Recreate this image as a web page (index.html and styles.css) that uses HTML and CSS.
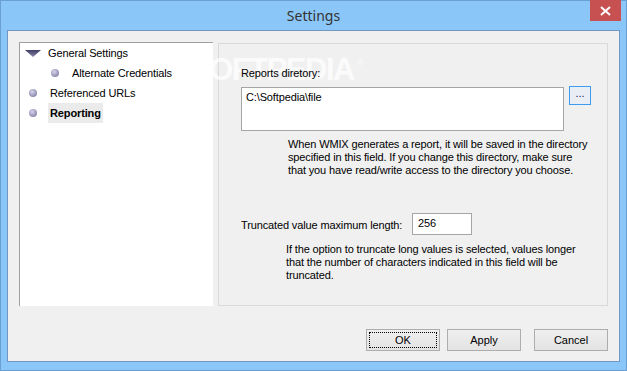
FILE: index.html
```html
<!DOCTYPE html>
<html lang="en">
<head>
    <meta charset="UTF-8">
    <title>Settings</title>
    <link rel="stylesheet" href="styles.css">
</head>
<body>
    <div class="window">
        <div class="titlebar">
            <span></span>
            <span class="title">Settings</span>
            <button class="close" aria-label="Close">
                <svg width="11" height="10" viewBox="0 0 11 10"><path d="M1 1 L10 9 M10 1 L1 9" stroke="#fff" stroke-width="2"/></svg>
            </button>
        </div>
        <div class="client">
            <div class="main">
                <ul class="tree">
                    <li class="node">
                        <svg class="arrow" width="16" height="7" viewBox="0 0 16 7">
                            <defs><linearGradient id="ag" x1="0" y1="0" x2="0" y2="1"><stop offset="0" stop-color="#3f3d63"/><stop offset="1" stop-color="#8886a8"/></linearGradient></defs>
                            <polygon points="0,0 16,0 8,7" fill="url(#ag)"/>
                        </svg>
                        <span class="label">General Settings</span>
                    </li>
                    <li class="node child">
                        <span class="dot"></span>
                        <span class="label">Alternate Credentials</span>
                    </li>
                    <li class="node">
                        <span class="dot"></span>
                        <span class="label">Referenced URLs</span>
                    </li>
                    <li class="node">
                        <span class="dot"></span>
                        <span class="label selected">Reporting</span>
                    </li>
                </ul>
                <div class="panel">
                    <div class="field-label">Reports diretory:</div>
                    <div class="dir-row">
                        <div class="textbox">C:\Softpedia\file</div>
                        <button class="browse">...</button>
                    </div>
                    <p class="hint">When WMIX generates a report, it will be saved in the directory<br>specified in this field. If you change this directory, make sure<br>that you have read/write access to the directory you choose.</p>
                    <div class="len-row">
                        <span class="len-label">Truncated value maximum length:</span>
                        <div class="numbox">256</div>
                    </div>
                    <p class="hint hint-2">If the option to truncate long values is selected, values longer<br>that the number of characters indicated in this field will be<br>truncated.</p>
                </div>
            </div>
            <div class="actions">
                <button class="btn focused">OK</button>
                <button class="btn apply">Apply</button>
                <button class="btn cancel">Cancel</button>
            </div>
        </div>
        <div class="watermark">SOFTPEDIA<sup>®</sup></div>
    </div>
</body>
</html>
```

FILE: styles.css
```css
body {
    margin: 0;
    font-family: "Liberation Sans", Arial, sans-serif;
    font-size: 11px;
    letter-spacing: -0.13px;
    color: #000;
}
.window {
    position: relative;
    width: 627px;
    height: 371px;
    box-sizing: border-box;
    background: #8bc6f8;
    border: 1px solid #6a9fd3;
    padding: 0 6px 8px 6px;
    display: flex;
    flex-direction: column;
}
.titlebar {
    height: 29px;
    display: grid;
    grid-template-columns: 1fr auto 1fr;
    align-items: start;
}
.title {
    font-family: "Noto Sans", "Open Sans", sans-serif;
    font-size: 14px;
    letter-spacing: 0;
    color: #333;
    line-height: 29px;
}
.close {
    justify-self: end;
    margin-top: -1px;
    margin-right: -1px;
    width: 31px;
    height: 21px;
    border: none;
    padding: 0;
    background: #c75050;
    display: flex;
    align-items: center;
    justify-content: center;
}
.client {
    flex: 1;
    background: #f0f0f0;
    border: 1px solid #7198c2;
    padding: 11px 11px 0 11px;
    display: flex;
    flex-direction: column;
}
.main {
    display: flex;
    gap: 5px;
    height: 264px;
}
.tree {
    width: 194px;
    margin: 0;
    padding: 0 0 0 5px;
    list-style: none;
    background: #fff;
    border-left: 1px solid #a0a0a0;
    border-top: 1px solid #a0a0a0;
    box-sizing: border-box;
}
.node {
    height: 20px;
    display: flex;
    align-items: center;
}
.node.child {
    padding-left: 22px;
}
.arrow {
    margin-right: 7px;
}
.dot {
    width: 8px;
    height: 8px;
    border-radius: 50%;
    background: radial-gradient(circle at 40% 35%, #d6d4ea 0%, #9d9bbd 55%, #6f6d92 100%);
    margin: 0 13px 0 4px;
}
.label {
    padding: 0 2px;
    line-height: 20px;
}
.node .arrow + .label,
.node .dot + .label {
    margin-left: -2px;
}
.selected {
    font-weight: bold;
    background: #ebebeb;
}
.panel {
    flex: 1;
    margin-top: 1px;
    height: 263px;
    box-sizing: border-box;
    border: 1px solid #d9d9d9;
    padding: 0 0 0 22px;
}
.field-label {
    position: relative;
    z-index: 1;
    margin-top: 23px;
    line-height: 13px;
}
.dir-row {
    display: flex;
    align-items: flex-start;
    gap: 5px;
    margin-top: 7px;
}
.textbox {
    width: 323px;
    height: 44px;
    box-sizing: border-box;
    border: 1px solid #a5a5a5;
    background: #fff;
    padding: 3px 4px;
    line-height: 13px;
}
.browse {
    width: 22px;
    height: 19px;
    margin-top: -1px;
    padding: 0 0 4px 0;
    border: 1px solid #3d9bf2;
    background: #e8eef4;
    font-family: "Liberation Sans", Arial, sans-serif;
    font-size: 11px;
    line-height: 13px;
    color: #1a1a60;
}
.hint {
    margin: 7px 0 0 47px;
    line-height: 13px;
}
.hint-2 {
    margin: 8px 0 0 45px;
}
.len-row {
    display: flex;
    align-items: center;
    margin-top: 36px;
}
.len-label {
    width: 171px;
    line-height: 13px;
    padding-top: 2px;
}
.numbox {
    width: 60px;
    height: 22px;
    box-sizing: border-box;
    border: 1px solid #a5a5a5;
    background: #fff;
    padding: 3px 5px;
    line-height: 13px;
}
.actions {
    display: flex;
    justify-content: flex-end;
    margin-top: 23px;
}
.btn {
    width: 74px;
    height: 22px;
    border: 1px solid #adadad;
    background: linear-gradient(#efefef, #e3e3e3);
    font-family: "Liberation Sans", Arial, sans-serif;
    font-size: 11px;
    color: #000;
    padding: 0;
}
.btn.focused {
    outline: 1px dotted #000;
    outline-offset: -4px;
}
.apply {
    margin-left: 7px;
}
.cancel {
    margin-left: 13px;
}
.watermark {
    position: absolute;
    left: 189px;
    top: 53px;
    font-family: "Liberation Sans", Arial, sans-serif;
    font-weight: bold;
    font-size: 31px;
    letter-spacing: -1.5px;
    line-height: 1;
    color: rgba(255, 255, 255, 0.75);
    pointer-events: none;
}
.watermark sup {
    font-size: 9px;
    font-weight: normal;
    vertical-align: 14px;
    margin-left: 3px;
}
```
